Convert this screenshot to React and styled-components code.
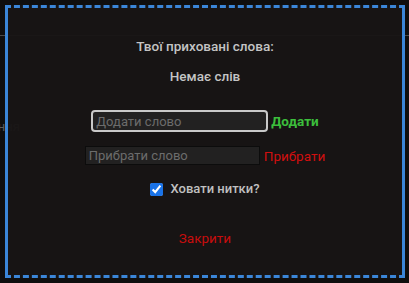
import React from "react";
import styled, { createGlobalStyle } from "styled-components";

const Global = createGlobalStyle`
  html, body { margin: 0; padding: 0; background: #0f0e0e; }
  body { font-family: Roboto, "Noto Sans", sans-serif; width: 409px; height: 283px; overflow: hidden; }
`;

const Page = styled.div`
  position: relative;
  width: 409px;
  height: 283px;
  overflow: hidden;
`;

const Header = styled.div`
  height: 35px;
  border-bottom: 1px solid #4a4a4a;
`;

const BackText = styled.div`
  margin-top: 83px;
  width: 20px;
  overflow: hidden;
  direction: rtl;
  white-space: nowrap;
  color: #5a5a5a;
  font-size: 13px;
  line-height: 16px;
`;

const Dialog = styled.div`
  position: absolute;
  left: 5px;
  top: 5px;
  width: 394px;
  height: 267px;
  border-style: dashed solid;
  border-width: 3px;
  border-color: #3b86d8;
  background: rgba(24, 21, 21, 0.96);
  display: flex;
  flex-direction: column;
  align-items: center;
  color: #c6c6c6;
`;

const Title = styled.div`
  margin-top: ${(p) => p.$mt}px;
  font-size: 13.5px;
  line-height: 16px;
  font-weight: 500;
  color: #c4c4c4;
`;

const Row = styled.div`
  margin-top: ${(p) => p.$mt}px;
  display: flex;
  align-items: center;
  gap: ${(p) => p.$gap}px;
`;

const Input = styled.input`
  box-sizing: border-box;
  width: ${(p) => p.$w}px;
  height: ${(p) => p.$h}px;
  background: #222121;
  border: ${(p) => (p.$focus ? "2px solid #c9c9c9" : "1px solid #0c0c0c")};
  border-radius: ${(p) => (p.$focus ? 4 : 0)}px;
  outline: none;
  padding: 0 3px;
  font-family: inherit;
  font-size: 13px;
  color: #ddd;
  &::placeholder { color: #6c6c6c; }
`;

const TextButton = styled.button`
  background: none;
  border: none;
  padding: 0;
  font-family: inherit;
  font-size: 13.5px;
  line-height: 18px;
  font-weight: ${(p) => (p.$bold ? 700 : 400)};
  color: ${(p) => p.$color};
  cursor: pointer;
`;

const CheckLabel = styled.label`
  margin-top: 16px;
  display: flex;
  align-items: center;
  gap: 7px;
  font-size: 13px;
  line-height: 16px;
  font-weight: 500;
  color: #c0c0c0;
`;

const Check = styled.input`
  margin: 0;
  width: 13px;
  height: 13px;
  accent-color: #1a73e8;
`;

const Close = styled(TextButton)`
  margin-top: 32px;
`;

export default function App() {
  return (
    <Page>
      <Global />
      <Header />
      <BackText>Сповіщення</BackText>
      <Dialog>
        <Title $mt={30}>Твої приховані слова:</Title>
        <Title $mt={14}>Немає слів</Title>
        <Row $mt={26} $gap={3}>
          <Input $w={177} $h={22} $focus placeholder="Додати слово" />
          <TextButton $bold $color="#3cbf3c">Додати</TextButton>
        </Row>
        <Row $mt={14} $gap={4}>
          <Input $w={175} $h={19} placeholder="Прибрати слово" />
          <TextButton $color="#d10f0f">Прибрати</TextButton>
        </Row>
        <CheckLabel>
          <Check type="checkbox" defaultChecked />
          Ховати нитки?
        </CheckLabel>
        <Close $color="#c80d0d">Закрити</Close>
      </Dialog>
    </Page>
  );
}
